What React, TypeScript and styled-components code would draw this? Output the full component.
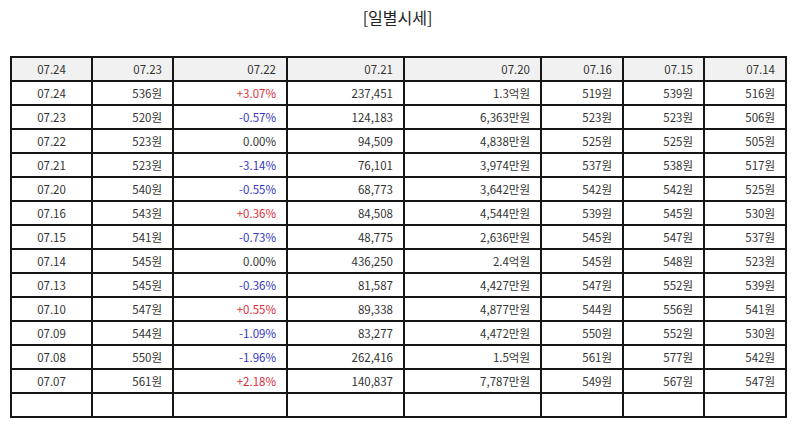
import React from 'react';
import styled, { createGlobalStyle } from 'styled-components';

type Row = [string, string, string, string, string, string, string, string];

const GlobalStyle = createGlobalStyle`
    html, body {
        margin: 0;
        padding: 0;
        background: #ffffff;
    }
    body {
        font-family: "Noto Sans CJK KR", "Noto Sans", sans-serif;
        color: #333333;
    }
`;

const headers = ['07.24', '07.23', '07.22', '07.21', '07.20', '07.16', '07.15', '07.14'];
const widths = [81, 81, 114, 117, 137, 82, 81, 82];

const rows: Row[] = [
    ['07.24', '536원', '+3.07%', '237,451', '1.3억원', '519원', '539원', '516원'],
    ['07.23', '520원', '-0.57%', '124,183', '6,363만원', '523원', '523원', '506원'],
    ['07.22', '523원', '0.00%', '94,509', '4,838만원', '525원', '525원', '505원'],
    ['07.21', '523원', '-3.14%', '76,101', '3,974만원', '537원', '538원', '517원'],
    ['07.20', '540원', '-0.55%', '68,773', '3,642만원', '542원', '542원', '525원'],
    ['07.16', '543원', '+0.36%', '84,508', '4,544만원', '539원', '545원', '530원'],
    ['07.15', '541원', '-0.73%', '48,775', '2,636만원', '545원', '547원', '537원'],
    ['07.14', '545원', '0.00%', '436,250', '2.4억원', '545원', '548원', '523원'],
    ['07.13', '545원', '-0.36%', '81,587', '4,427만원', '547원', '552원', '539원'],
    ['07.10', '547원', '+0.55%', '89,338', '4,877만원', '544원', '556원', '541원'],
    ['07.09', '544원', '-1.09%', '83,277', '4,472만원', '550원', '552원', '530원'],
    ['07.08', '550원', '-1.96%', '262,416', '1.5억원', '561원', '577원', '542원'],
    ['07.07', '561원', '+2.18%', '140,837', '7,787만원', '549원', '567원', '547원'],
];

const toneOf = (value: string): 'up' | 'down' | 'flat' => {
    if (value.startsWith('+')) return 'up';
    if (value.startsWith('-')) return 'down';
    return 'flat';
};

const App: React.FunctionComponent = () => {
    return (
        <>
            <GlobalStyle />
            <Page>
                <Title>[일별시세]</Title>
                <Table>
                    <colgroup>
                        {widths.map((w, i) => (
                            <Col key={i} $width={w} />
                        ))}
                    </colgroup>
                    <thead>
                        <tr>
                            {headers.map((h, i) => (
                                <HeadCell key={i} $center={i === 0}>
                                    {h}
                                </HeadCell>
                            ))}
                        </tr>
                    </thead>
                    <tbody>
                        {rows.map((row) => (
                            <tr key={row[0]}>
                                {row.map((cell, i) => (
                                    <Cell
                                        key={i}
                                        $center={i === 0}
                                        $tone={i === 2 ? toneOf(cell) : 'flat'}
                                    >
                                        {cell}
                                    </Cell>
                                ))}
                            </tr>
                        ))}
                        <tr>
                            {headers.map((_, i) => (
                                <Cell key={i} $tone="flat" />
                            ))}
                        </tr>
                    </tbody>
                </Table>
            </Page>
        </>
    );
};

export default App;

const Page = styled.div`
    width: 794px;
    padding: 0 9px 0 10px;
    box-sizing: border-box;
`;

const Title = styled.div`
    height: 56px;
    padding-top: 6px;
    box-sizing: border-box;
    text-align: center;
    font-size: 16px;
    line-height: 22px;
    color: #222222;
`;

const Table = styled.table`
    width: 776px;
    border-collapse: collapse;
    table-layout: fixed;
    font-size: 11.5px;
`;

const Col = styled.col<{ $width: number }>`
    width: ${(p) => p.$width}px;
`;

const HeadCell = styled.th<{ $center?: boolean }>`
    height: 21px;
    padding: 0 10px 1px;
    border: 2px solid #161616;
    background-color: #f1f1f1;
    font-weight: normal;
    color: #333333;
    text-align: ${(p) => (p.$center ? 'center' : 'right')};
`;

const Cell = styled.td<{ $center?: boolean; $tone: 'up' | 'down' | 'flat' }>`
    height: 21px;
    padding: 0 10px 1px;
    border: 2px solid #161616;
    text-align: ${(p) => (p.$center ? 'center' : 'right')};
    color: ${(p) =>
        p.$tone === 'up' ? '#dd2d38' : p.$tone === 'down' ? '#3535c8' : '#333333'};
`;
